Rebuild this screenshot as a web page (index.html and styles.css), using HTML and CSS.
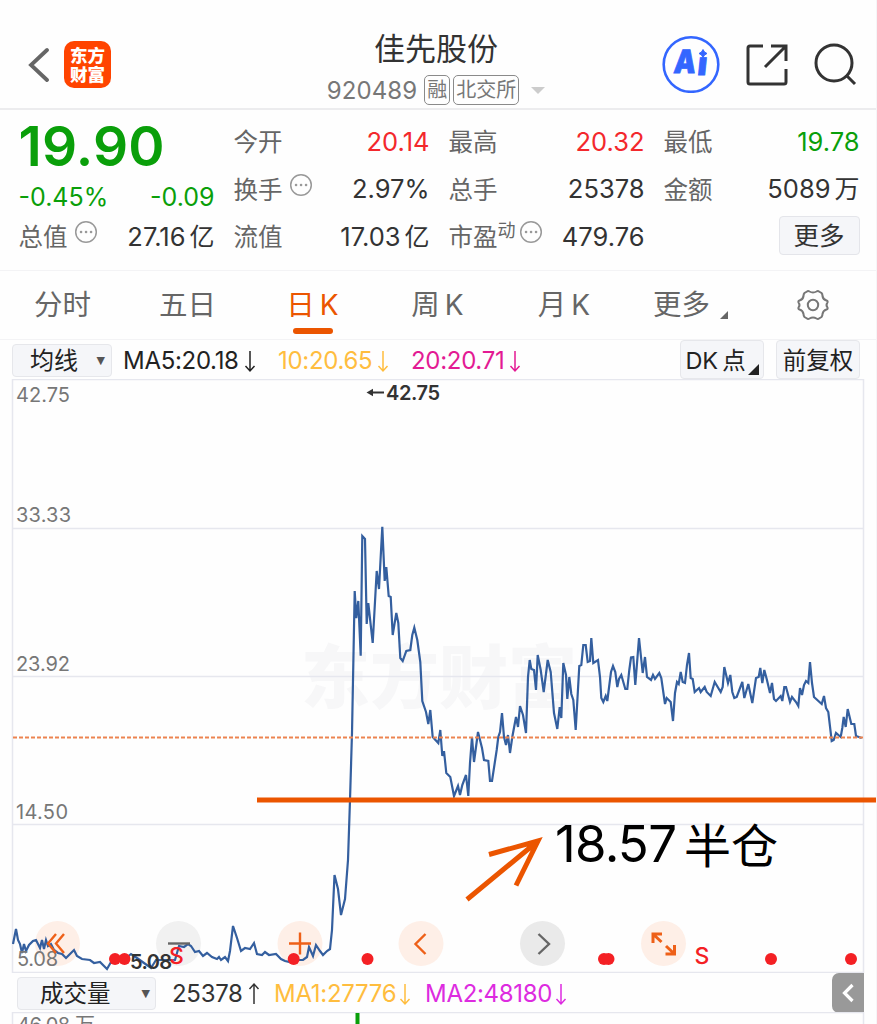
FILE: index.html
```html
<!DOCTYPE html>
<html lang="zh-CN">
  <head>
    <meta charset="utf-8">
    <meta name="viewport" content="width=device-width, initial-scale=1">
    <title>佳先股份 920489</title>
    <link rel="stylesheet" href="styles.css">
  </head>
  <body>
    <header class="topbar">
        <div class="left">
            <svg class="back" width="24" height="36" viewBox="0 0 24 36"><path d="M21 4 5 19 21 34"/></svg>
            <div class="logo">东方<br>财富</div>
        </div>
        <div class="title">
            <h1>佳先股份</h1>
            <div class="sub">
                <span class="code">920489</span>
                <span class="tag">融</span>
                <span class="tag">北交所</span>
                <i class="caret"></i>
            </div>
        </div>
        <div class="actions">
            <svg width="58" height="58" viewBox="0 0 58 58">
                <circle cx="29" cy="29.500" r="27.3" fill="none" stroke="#3366ff" stroke-width="2.6"/>
                <g transform="skewX(-6)">
                    <text class="ai" x="15" y="38.5" textLength="22" lengthAdjust="spacingAndGlyphs">A</text>
                    <text class="ai" x="39" y="40">ı</text>
                </g>
                <path d="M41 14.500 Q42 17.500 45 18.500 Q42 19.500 41 22.500 Q40 19.500 37 18.500 Q40 17.500 41 14.500Z" fill="#3366ff" stroke="#3366ff"/>
            </svg>
            <svg class="line-icon share" width="44" height="44" viewBox="0 0 44 44">
                <path d="M18 4H5Q3 4 3 6V40Q3 42 5 42H39Q41 42 41 40V27M26 4H41V19M41 4 20 25"/>
            </svg>
            <svg class="line-icon search" width="44" height="44" viewBox="0 0 44 44">
                <circle cx="20" cy="21" r="18"/><path d="M32 33 41 42"/>
            </svg>
        </div>
    </header>

    <section class="quote">
        <div class="col">
            <div class="price">19.90</div>
            <div class="row change green"><span>-0.45%</span><span>-0.09</span></div>
            <div class="row"><label>总值<svg class="more" viewBox="0 0 24 24"><use href="#dots"/></svg></label><b>27.16<em>亿</em></b></div>
        </div>
        <div class="col">
            <div class="row"><label>今开</label><b class="red">20.14</b></div>
            <div class="row"><label>换手<svg class="more" viewBox="0 0 24 24"><use href="#dots"/></svg></label><b>2.97%</b></div>
            <div class="row"><label>流值</label><b>17.03<em>亿</em></b></div>
        </div>
        <div class="col">
            <div class="row"><label>最高</label><b class="red">20.32</b></div>
            <div class="row"><label>总手</label><b>25378</b></div>
            <div class="row"><label>市盈<sup>动</sup><svg class="more tight" viewBox="0 0 24 24"><g id="dots"><circle cx="12" cy="12" r="10.300"/><path d="M7 12h.1M12 12h.1M17 12h.1"/></g></svg></label><b>479.76</b></div>
        </div>
        <div class="col">
            <div class="row"><label>最低</label><b class="green">19.78</b></div>
            <div class="row"><label>金额</label><b>5089<em>万</em></b></div>
            <div class="row"><button class="more-btn">更多</button></div>
        </div>
    </section>

    <nav class="tabs">
        <a>分时</a>
        <a>五日</a>
        <a class="active">日<span>K</span></a>
        <a>周<span>K</span></a>
        <a>月<span>K</span></a>
        <a class="drop">更多<i class="corner"></i></a>
        <a>
            <svg class="gear" width="34" height="32" viewBox="0 0 34 32">
                <path d="M11 2.500Q12 1.500 13.500 2.500Q17 4.500 20.500 2.500Q22 1.500 23 2.500L25.500 4Q26.500 5 26.500 7Q27 10.500 30.500 11.500Q32 12 31.500 13.500Q29.500 16 31.500 18.500Q32 20 30.500 20.500Q27 21.500 26.500 25Q26.500 27 25.500 28L23 29.500Q22 30.500 20.500 29.500Q17 27.500 13.500 29.500Q12 30.500 11 29.500L8.500 28Q7.500 27 7.500 25Q7 21.500 3.500 20.500Q2 20 2.500 18.500Q4.500 16 2.500 13.500Q2 12 3.500 11.500Q7 10.500 7.500 7Q7.500 5 8.500 4Z"/>
                <circle cx="17" cy="16" r="5.200"/>
            </svg>
        </a>
    </nav>

    <div class="indicator">
        <button class="select ma">均线<i>▼</i></button>
        <span class="v v5">MA5:20.18<svg class="arr" viewBox="0 0 12 24"><use href="#down"/></svg></span>
        <span class="v v10">10:20.65<svg class="arr" viewBox="0 0 12 24"><use href="#down"/></svg></span>
        <span class="v v20">20:20.71<svg class="arr" viewBox="0 0 12 24"><path id="down" d="M6 2V22M1.500 17 6 22 10.500 17"/></svg></span>
        <div class="right">
            <button class="chip dk">DK<span>点</span><i class="corner"></i></button>
            <button class="chip">前复权</button>
        </div>
    </div>

    <svg class="chart" width="877" height="594" viewBox="0 379 877 594">
        <text class="watermark" x="301" y="703" textLength="276">东方财富</text>
        <path class="grid" d="M12.500 379.500H863.500M12.500 528.500H863M12.500 676.500H863M12.500 824.500H863M12.500 972.500H863M12.500 379V973M863.500 379V973"/>
        <g class="controls">
            <circle class="warm" cx="57.500" cy="943.500" r="22.500"/>
            <circle class="cool" cx="178.500" cy="943.500" r="22.500"/>
            <circle class="warm" cx="300" cy="943.500" r="22.500"/>
            <circle class="warm" cx="421" cy="943.500" r="22.500"/>
            <circle class="cool dark" cx="542.500" cy="943.500" r="22.500"/>
            <circle class="warm" cx="663.500" cy="943.500" r="22.500"/>
        </g>
        <polyline class="price-line" points="13,944 16,929 18,940 20,944 22,953 24,944 26,951 29,945 33,941 36,940 38,944 40,948 42,940 44,949 46,940 48,946 51,944 54,950 58,953 62,954 66,958 69,955 74,950 77,956 82,959 90,960 94,963 100,962 104,966 107,969 111,962 115,960 125,959 131,954 137,958 144,963 151,968 156,960 165,960 175,960 179,946 184,947 188,944 191,946 195,952 199,951 203,956 207,953 212,957 217,959 219,957 221,960 225,957 228,961 230,951 233,926 237,938 241,951 245,948 250,949 254,943 257,954 262,955 265,952 269,955 276,954 281,959 285,961 290,962 297,960 303,960 307,957 309,947 313,956 316,945 320,951 323,955 327,951 330,949 332,930 334.500,875 338,889 341,915 345,899 348,860
            350,800 352,733 354.700,591 356.300,618 358.300,601 360.700,655.700 362.300,536 365,539 366.700,624 368.300,603 372.700,643 376.700,571 379,589 382.300,526.700 384.700,581 386.300,567 388.700,596 390.700,597 392.700,635 396.300,613 398.300,623 400.300,658 402.700,661 406.300,651 410.300,650 412.300,635 414.300,627.700 417.300,640 420.300,662 422.300,701 426,712 428.300,724 430.300,710 432.700,737 438.300,743 440.300,730 442.300,756 444,751 446.300,773 450.300,777 454,796 458,786 460,795 462.300,785 466,775 468.300,796 470,763 472,737 474,762 478,732 482,748 484,760 488.300,761 490,781 492,781 496.700,750 498.300,737 500,732 502,713 504,737 506,745 508,735 510,753 512.300,737 516,717 518,727 520,706 523,715 526,733 528,677 529.700,660 531.300,669 534,670 536,690 537.700,655 540.700,670 543.700,692 547.700,660 550.700,672 554,713 557.300,729 559.700,707 561.300,718 563.300,663 566,675 567.300,699 569.300,677 571.300,694 573.300,700 575.700,730 579.300,666 581.300,665 583.300,645 585.700,645 587.700,662 590,661 591.300,638
            593.300,663 598,660 600,677 601.300,698 603.300,702 605.700,696 607.300,701 611,672 613,666 615.300,672 617.300,687 619,679 621.300,675 625.300,689 627.300,689 629.300,670 631,657.500 633.300,657 635.300,685 639,638 642.700,673 645,657 647,677 651,680 653,675 655,679 659.300,673 661.300,678 665,704 666.700,698 670.700,702 673,721 675,693 677,682 678.700,684 680.700,672 682.700,682 685,683 687,665 689,653 690.700,678 692.700,679 694.700,692 699,688 700.700,692 704.700,687 706.700,692 710.700,696 714.700,682 720.700,692 722.700,687 724.300,667 728,683 730.300,675 732.300,692 734.300,698 736.700,697 742.300,682 744.300,698 748.300,684 752.300,703 756,678 758.700,677 760.300,668 762.300,683 764.300,670 766.700,679 770,693 772,683 774,699 776,701 780.700,696 782.300,701 784.300,687 786,687 790,702 792,697 796,702 798.300,706 800,688 802,695 804,685 806,681 808.300,683 810,662 812,683 814,697 821.700,704 824,696 826,708 828.300,712 831.700,741 833.700,740 836,733 840.700,737 842.300,728 843.700,717 845.700,727 847.700,709 851.300,724 854.300,724 856,736 861.700,738"/>
        <path class="current" d="M13 737.500H863"/>

        <g class="axis">
            <text x="16" y="402" textLength="54">42.75</text>
            <text x="16" y="522" textLength="55">33.33</text>
            <text x="16" y="671" textLength="54">23.92</text>
            <text x="16" y="819" textLength="52">14.50</text>
            <text x="17" y="966" textLength="41">5.08</text>
        </g>
        <path class="peak-arrow" d="M369 392.500H384"/><path d="M366.500 392.500 373 388.700V396.300Z" fill="#333"/>
        <text class="extreme" x="386" y="400" textLength="54">42.75</text>
        <text class="extreme" x="130" y="969" textLength="42">5.08</text>

        <path class="glyph warm" d="M56 934 48 943.500 56 953M64 934 56 943.500 64 953"/>
        <path class="glyph cool" d="M168 943.500H190"/>
        <path class="glyph warm" d="M289 943.500H311M300 932.500V954.500"/>
        <path class="glyph warm" d="M425.500 934 415.500 944 425.500 954"/>
        <path class="glyph cool" d="M538.500 934 549 944 538.500 954"/>
        <path class="glyph warm thick" d="M653 943V934H662M653 934 661.500 942M674.500 945V954H665.500M674.500 954 666 946"/>

        <g class="events">
            <circle cx="115" cy="959" r="6"/><circle cx="124.500" cy="959" r="6"/>
            <circle cx="293.700" cy="959" r="6"/><circle cx="367.500" cy="959" r="6"/>
            <circle cx="604" cy="959" r="6"/><circle cx="608.500" cy="959" r="6"/>
            <circle cx="771" cy="959" r="6"/><circle cx="851" cy="959" r="6"/>
            <text x="169" y="964">S</text>
            <text x="694.500" y="964">S</text>
        </g>

        <g class="note">
            <path d="M257 800H876"/>
            <path d="M467 899.500 538 841M489 854.500 538 841 516 885.500"/>
            <text x="555" y="862" textLength="122">18.57</text>
            <text class="han" x="684" y="863" textLength="94">半仓</text>
        </g>
    </svg>

    <div class="indicator volume">
        <button class="select vol">成交量<i>▼</i></button>
        <span class="v now">25378<svg class="arr up" viewBox="0 0 12 24"><use href="#down"/></svg></span>
        <span class="v m1">MA1:27776<svg class="arr" viewBox="0 0 12 24"><use href="#down"/></svg></span>
        <span class="v m2">MA2:48180<svg class="arr" viewBox="0 0 12 24"><use href="#down"/></svg></span>
        <button class="expand"><svg width="14" height="22" viewBox="0 0 14 22"><path d="M11.500 3 3.500 11 11.500 19"/></svg></button>
    </div>
    <svg class="chart" width="877" height="12" viewBox="0 1012 877 12">
        <path class="grid" d="M12.500 1024V1012.500H863.500V1024"/>
        <text class="vol-max" x="17" y="1032" textLength="78">46.08 万</text>
        <path d="M355.500 1013H359.500V1024H355.500Z" fill="#0a9f0a"/>
    </svg>
  </body>
</html>
```
FILE: styles.css
```css
* {
    box-sizing: border-box;
}
html, body {
    height: 1024px;
    overflow: hidden;
}
body {
    margin: 0;
    width: 877px;
    background: #fefefe;
    color: #333;
    font-family: Inter, "Noto Sans CJK SC", sans-serif;
    border-right: 1px solid #f5f5f7;
}
h1, button {
    margin: 0;
    font: inherit;
    color: inherit;
}
svg {
    display: block;
    flex: none;
}
.red {
    color: #f3282c;
}
.green {
    color: #0a9f0a;
}

/* top bar */
.topbar {
    height: 110px;
    display: grid;
    grid-template-columns: 250px 1fr 250px;
    padding: 20px 18px 0 26px;
    border-bottom: 2px solid #ececee;
}
.left {
    display: flex;
    align-items: center;
    gap: 14px;
}
.back {
    fill: none;
    stroke: #666;
    stroke-width: 3.8;
    stroke-linecap: round;
}
.logo {
    width: 47px;
    height: 47px;
    border-radius: 10px;
    background: #ff4400;
    color: #fff;
    font: 900 17.5px/19px "Noto Sans CJK SC", sans-serif;
    text-align: center;
    padding-top: 4px;
}
.title {
    text-align: center;
    margin-left: -12px;
}
.title h1 {
    font-size: 31px;
    line-height: 57px;
    font-weight: 400;
}
.sub {
    display: flex;
    justify-content: center;
    align-items: center;
    gap: 3px;
    height: 26px;
    color: #777;
    white-space: nowrap;
}
.code {
    font-size: 24px;
    letter-spacing: .1px;
    margin-right: 4px;
}
.tag {
    height: 30px;
    border: 1.5px solid #8a8a8a;
    border-radius: 5px;
    padding: 0 2px;
    font-size: 20px;
    line-height: 29px;
}
.caret {
    border: 7px solid transparent;
    border-top-color: #ccc;
    border-bottom: 0;
    margin-left: 9px;
}
.actions {
    display: flex;
    align-items: center;
    justify-content: flex-end;
}
.ai {
    font: 900 32px Inter, sans-serif;
    fill: #3366ff;
    stroke: #3366ff;
    stroke-width: .8;
}
.line-icon {
    fill: none;
    stroke: #333;
    stroke-width: 3;
}
.share {
    margin-left: 25px;
}
.search {
    margin-left: 25px;
}

/* quote */
.quote {
    height: 160px;
    display: grid;
    grid-template-columns: repeat(4, 196px);
    column-gap: 19px;
    padding: 8px 0 0 18.5px;
}
.row {
    height: 47.5px;
    display: flex;
    justify-content: space-between;
    align-items: center;
    font-size: 25.5px;
    line-height: 30px;
    white-space: nowrap;
}
.row b {
    font-weight: 400;
}
.row em {
    font-style: normal;
    font-size: 25px;
    margin-left: 4px;
}
.row label {
    display: flex;
    font-size: 24.5px;
    color: #666;
    margin-top: 1px;
}
.row sup {
    font-size: 18px;
    line-height: 18px;
}
.more {
    width: 24px;
    height: 24px;
    margin: -2px 0 0 6px;
    fill: none;
    stroke: #999;
    stroke-width: 1.5;
    stroke-linecap: round;
}
.more path {
    stroke-width: 2.5;
}
.more.tight {
    margin-left: 3px;
}
.price {
    height: 56px;
    line-height: 56px;
    font-size: 55px;
    font-weight: 600;
    color: #0a9f0a;
    letter-spacing: .2px;
}
.row.change {
    height: 39px;
    padding-bottom: 2px;
    font-size: 25px;
    line-height: 28px;
    align-items: flex-end;
}
.more-btn {
    width: 81px;
    height: 39px;
    margin: -3px 0 0 auto;
    padding: 1px 0 0;
    border: 1.5px solid #e4e5ea;
    border-radius: 4px;
    background: #f5f6f9;
}

/* period tabs */
.tabs {
    height: 70px;
    display: grid;
    grid-template-columns: 125px 125px 125px 125px 128px 125px 120px;
    border-top: 1px solid #f3f3f5;
    border-bottom: 1px solid #f3f3f5;
    font-size: 28.5px;
    color: #666;
}
.tabs a {
    position: relative;
    display: flex;
    justify-content: center;
    align-items: center;
    line-height: 36px;
}
.tabs span {
    margin: 0 0 0 5px;
    font-size: 28px;
}
.tabs .active {
    color: #eb5500;
}
.tabs .active::after {
    content: "";
    position: absolute;
    bottom: 5px;
    width: 40px;
    height: 6px;
    border-radius: 3px;
    background: #eb5500;
}
.corner {
    align-self: flex-end;
    border-left: 8px solid transparent;
    border-bottom: 8px solid #666;
}
.drop .corner {
    margin: 0 0 20px 10px;
}
.gear {
    fill: none;
    stroke: #777;
    stroke-width: 2;
}

/* indicator rows */
.indicator {
    height: 39px;
    display: flex;
    align-items: center;
    padding: 2px 16px 0 12px;
    font-size: 24px;
    line-height: 28px;
    white-space: nowrap;
}
.select, .chip {
    height: 33px;
    padding: 0;
    display: flex;
    align-items: center;
    border: 1.5px solid #e6e7eb;
    border-radius: 4px;
    background: #f5f6f9;
    color: #222;
    line-height: 28px;
}
.select {
    justify-content: space-between;
}
.select i {
    font: 11px "DejaVu Sans", sans-serif;
    color: #555;
}
.ma {
    width: 100px;
    padding: 0 6px 0 17px;
}
.v {
    display: flex;
    align-items: center;
    letter-spacing: -.3px;
}
.arr {
    width: 12px;
    height: 24px;
    margin-left: 5px;
    fill: none;
    stroke: currentColor;
    stroke-width: 1.5;
}
.m1 .arr, .m2 .arr {
    margin-left: 3px;
}
.up {
    transform: rotate(180deg);
}
.v5 {
    width: 155px;
    margin-left: 11px;
    color: #222;
}
.v10 {
    width: 133px;
    color: #ffbd3e;
}
.v20 {
    color: #e31a93;
}
.right {
    display: flex;
    gap: 12px;
    margin-left: auto;
}
.chip {
    height: 39px;
    width: 84px;
    justify-content: center;
    margin-top: -2px;
    padding-top: 2px;
    font-size: 23.5px;
}
.dk span {
    margin-left: 4px;
}
.dk .corner {
    border-left-width: 11px;
    border-bottom: 11px solid #222;
    margin: 0 0 3px 2px;
}
.volume {
    padding: 2px 12px 0 17px;
}
.vol {
    width: 139px;
    padding: 0 5px 0 22px;
    font-size: 23.5px;
}
.now {
    width: 102px;
    margin-left: 16px;
}
.m1 {
    width: 151px;
    color: #ffbd3e;
}
.m2 {
    color: #dd2be0;
}
.expand {
    width: 32px;
    height: 40px;
    margin: -2px 0 0 auto;
    padding: 0 0 0 9px;
    border: 0;
    border-radius: 7px 0 0 7px;
    background: #999;
    fill: none;
    stroke: #fff;
    stroke-width: 3.2;
}

/* chart */
.watermark {
    font: 900 69px "Noto Sans CJK SC", sans-serif;
    fill: #f7f7f8;
}
.grid {
    fill: none;
    stroke: #e6e7ee;
    stroke-width: 1.5;
}
.price-line {
    fill: none;
    stroke: #345f9f;
    stroke-width: 2.2;
}
.current {
    stroke: #ec8450;
    stroke-width: 2;
    stroke-dasharray: 4 2;
}
.axis, .vol-max {
    font-size: 20px;
    fill: #777;
}
.peak-arrow {
    stroke: #333;
    stroke-width: 2;
}
.extreme {
    font-size: 20px;
    font-weight: 600;
    fill: #333;
}
.controls .warm {
    fill: #feefe7;
}
.controls .cool {
    fill: #f1f1f1;
}
.controls .dark {
    fill: #eaeaea;
}
.glyph {
    fill: none;
    stroke-width: 2.4;
}
.glyph.warm {
    stroke: #ee6018;
}
.glyph.cool {
    stroke: #666;
}
.glyph.thick {
    stroke-width: 3;
}
.events {
    fill: #f42024;
    font-size: 23px;
    font-weight: 500;
}
.note path {
    fill: none;
    stroke: #eb5500;
    stroke-width: 5;
}
.note text {
    font-size: 51px;
    fill: #000;
}
.note .han {
    font-size: 47px;
}
```
